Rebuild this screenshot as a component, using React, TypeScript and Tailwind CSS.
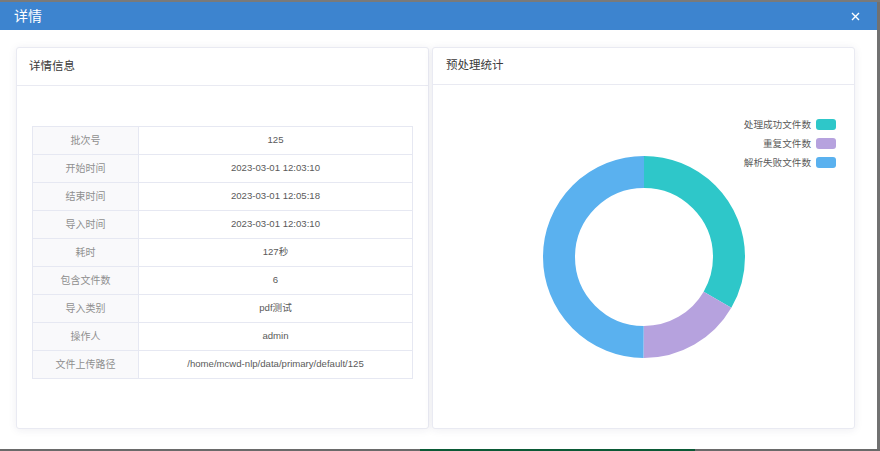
import React from 'react'

const rows: [string, string][] = [
  ['批次号', '125'],
  ['开始时间', '2023-03-01 12:03:10'],
  ['结束时间', '2023-03-01 12:05:18'],
  ['导入时间', '2023-03-01 12:03:10'],
  ['耗时', '127秒'],
  ['包含文件数', '6'],
  ['导入类别', 'pdf测试'],
  ['操作人', 'admin'],
  ['文件上传路径', '/home/mcwd-nlp/data/primary/default/125'],
]

const stats = [
  { name: '处理成功文件数', value: 2, color: '#2ec7c9' },
  { name: '重复文件数', value: 1, color: '#b6a2de' },
  { name: '解析失败文件数', value: 3, color: '#5ab1ef' },
]

function Donut() {
  const r = 85
  const c = 2 * Math.PI * r
  const total = stats.reduce((s, d) => s + d.value, 0)
  let offset = 0
  return (
    <svg width="204" height="204" viewBox="0 0 204 204">
      <g transform="rotate(-90 102 102)">
        {stats.map((d) => {
          const len = (d.value / total) * c
          const el = (
            <circle
              key={d.name}
              cx="102"
              cy="102"
              r={r}
              fill="none"
              stroke={d.color}
              strokeWidth="32"
              strokeDasharray={`${len} ${c - len}`}
              strokeDashoffset={-offset}
            />
          )
          offset += len
          return el
        })}
      </g>
    </svg>
  )
}

export default function App() {
  return (
    <div
      className="flex h-[451px] w-[880px] flex-col overflow-hidden bg-[#717171]"
      style={{ fontFamily: '"Liberation Sans", "Noto Sans CJK SC", sans-serif' }}
    >
      <div className="h-[2px] w-full bg-[#7a7a7a]" />
      <div className="flex h-[447px] w-[877px] flex-col bg-white">
        <div className="flex h-[28px] items-center justify-between bg-[#3d84cf] pl-[14px] pr-[17px]">
          <span className="text-[14px] text-white">详情</span>
          <svg width="9" height="9" viewBox="0 0 9 9">
            <path d="M1 1L8 8M8 1L1 8" stroke="white" strokeWidth="1.4" />
          </svg>
        </div>

        <div className="flex flex-1 gap-[3px] pl-[16px] pt-[17px]">
          {/* 详情信息 */}
          <div className="flex h-[382px] w-[413px] flex-col rounded-[3px] border border-[#e9eaf2] bg-white shadow-[0_1px_8px_rgba(40,40,90,0.08)]">
            <div className="flex h-[38px] items-center border-b border-[#e9eaf2] pl-[12px] text-[11.5px] text-[#3a3a3a]">
              详情信息
            </div>
            <div className="px-[15px] pt-[40px]">
              <table className="w-full border-collapse text-[9.6px]">
                <tbody>
                  {rows.map(([k, v]) => (
                    <tr key={k} className="h-[28px]">
                      <td className="w-[106px] border border-[#e6e8f2] bg-[#f9f9fb] text-center text-[10px] text-[#8f8f8f]">{k}</td>
                      <td className="border border-[#e6e8f2] text-center text-[#5a5a5a]">{v}</td>
                    </tr>
                  ))}
                </tbody>
              </table>
            </div>
          </div>

          {/* 预处理统计 */}
          <div className="flex h-[382px] w-[423px] flex-col rounded-[3px] border border-[#e9eaf2] bg-white shadow-[0_1px_8px_rgba(40,40,90,0.08)]">
            <div className="flex h-[37px] items-center border-b border-[#e9eaf2] pl-[13px] text-[11.5px] text-[#3a3a3a]">
              预处理统计
            </div>
            <div className="relative flex flex-1 items-center justify-center">
              <Donut />
              <div className="absolute right-[18px] top-[34px] flex flex-col items-end gap-[8px]">
                {stats.map((d) => (
                  <div key={d.name} className="flex items-center gap-[5px] text-[9.6px] leading-[11px] text-[#5a5a5a]">
                    <span>{d.name}</span>
                    <span className="h-[11px] w-[20px] rounded-[3px]" style={{ backgroundColor: d.color }} />
                  </div>
                ))}
              </div>
            </div>
          </div>
        </div>
      </div>
      <div className="flex h-[2px] w-full">
        <div className="w-[420px] bg-[#6a6a6a]" />
        <div className="w-[275px] bg-[#0b5a36]" />
        <div className="flex-1 bg-[#6a6a6a]" />
      </div>
    </div>
  )
}
